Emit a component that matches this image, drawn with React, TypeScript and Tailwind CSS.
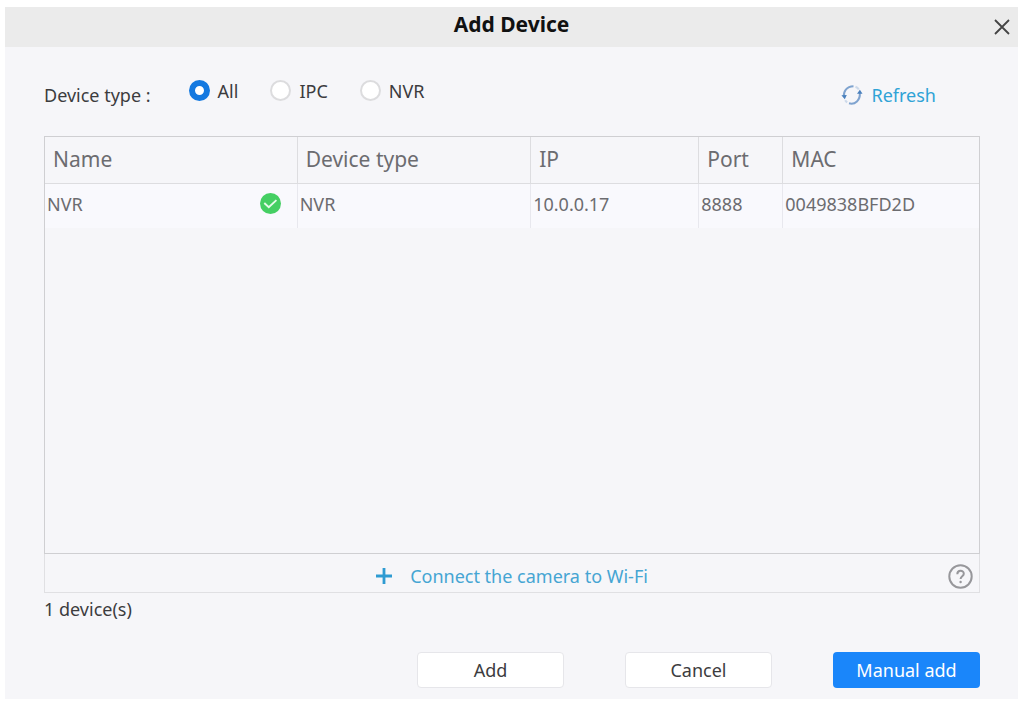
import { useState } from "react";

const deviceTypes = ["All", "IPC", "NVR"];

const devices = [
  { name: "NVR", type: "NVR", ip: "10.0.0.17", port: "8888", mac: "0049838BFD2D" },
];

const headCell = "border-r border-[#dddde0] pl-2 text-left text-[21px] font-normal last:border-r-0";
const bodyCell = "border-r border-[#e8e8ee] pb-1 pl-0.5 last:border-r-0";
const action = "h-9 w-[147px] rounded text-lg";

function CloseIcon() {
  return (
    <svg className="size-4" viewBox="0 0 16 16" fill="none" stroke="#444" strokeWidth="1.8" aria-hidden="true">
      <path d="M1 1l14 14M15 1L1 15" />
    </svg>
  );
}

function RefreshIcon() {
  return (
    <svg className="size-[22px]" viewBox="0 0 22 22" fill="none" stroke="#7fa3cf" strokeWidth="2" aria-hidden="true">
      <path d="M3 13C2.200 7.500 5.500 2.500 12.500 2.300" />
      <path d="M8 19.300C14 21 19.500 16 18.800 9" />
      <path d="M14.500 2.800c1.500.6 2.600 1.500 3.300 2.700M4.200 16.200c.6 1 1.200 1.700 2 2.200" strokeOpacity="0.35" />
      <path d="M.4 11.300l5.400-.2-2 4.200zM16 9.800l2.900-4 2.600 4z" fill="#4a80bd" stroke="none" />
    </svg>
  );
}

function CheckIcon() {
  return (
    <svg className="size-[21px]" viewBox="0 0 22 22" role="img" aria-label="Available">
      <circle cx="11" cy="11" r="11" fill="#45cf63" />
      <path d="M4.500 10.500l4.700 4.300 8-7.300" fill="none" stroke="#e6fbe9" strokeWidth="2" />
    </svg>
  );
}

function PlusIcon() {
  return (
    <svg className="size-4" viewBox="0 0 16 16" fill="none" stroke="#2e9bd2" strokeWidth="2.8" aria-hidden="true">
      <path d="M8 0v16M0 8h16" />
    </svg>
  );
}

function HelpIcon() {
  return (
    <svg className="size-[25px]" viewBox="0 0 25 25" fill="none" stroke="#97979b" strokeWidth="2" aria-hidden="true">
      <circle cx="12.500" cy="12.500" r="11.200" />
      <path d="M9.300 10.200c0-4.400 6.500-4.400 6.500-.5 0 2.500-3.200 2.600-3.200 5.300" />
      <circle cx="12.600" cy="18" r="1.200" fill="#97979b" stroke="none" />
    </svg>
  );
}

export default function App() {
  const [selected, setSelected] = useState("All");

  return (
    <div className="flex min-h-screen flex-col bg-white pt-[7px] pr-0.5 pb-1 pl-[5px] font-['Noto_Sans',sans-serif] text-lg text-[#3c3c3e]">
      <div role="dialog" aria-labelledby="dialog-title" className="flex flex-1 flex-col bg-[#f6f6f9]">
        <header className="grid h-10 grid-cols-[1fr_auto_1fr] items-center bg-[#ebebeb] px-2">
          <h1 id="dialog-title" className="col-start-2 pb-1.5 text-[21px] font-bold text-[#111]">
            Add Device
          </h1>
          <button type="button" aria-label="Close" className="justify-self-end">
            <CloseIcon />
          </button>
        </header>

        <main className="flex flex-1 flex-col pr-[38px] pb-[11px] pl-[39px]">
          <div className="flex h-[89px] items-center pt-1.5 pr-11">
            <fieldset className="flex items-center gap-[38px]">
              <legend className="float-left text-lg">Device type :</legend>
              <div className="flex gap-8 pb-2">
                {deviceTypes.map((type) => (
                  <label key={type} className="flex items-center gap-2">
                    <input
                      type="radio"
                      name="device-type"
                      checked={selected === type}
                      onChange={() => setSelected(type)}
                      className="size-[21px] appearance-none rounded-full border-2 border-[#dcdcde] bg-white checked:border-[6px] checked:border-[#1479e0]"
                    />
                    {type}
                  </label>
                ))}
              </div>
            </fieldset>
            <button type="button" className="ml-auto flex items-center gap-2 text-[#2fa3d6]">
              <RefreshIcon />
              Refresh
            </button>
          </div>

          <div className="flex-1 border border-[#cfcfd2]">
            <table className="w-full table-fixed border-collapse text-[#6c6c70]">
              <colgroup>
                <col className="w-[27%]" />
                <col className="w-[25%]" />
                <col className="w-[18%]" />
                <col className="w-[9%]" />
                <col className="w-[21%]" />
              </colgroup>
              <thead>
                <tr className="h-[46px] border-b border-[#dddde0]">
                  <th className={headCell}>Name</th>
                  <th className={headCell}>Device type</th>
                  <th className={headCell}>IP</th>
                  <th className={headCell}>Port</th>
                  <th className={headCell}>MAC</th>
                </tr>
              </thead>
              <tbody>
                {devices.map((device) => (
                  <tr key={device.mac} className="h-[45px] bg-[#f9f9fd]">
                    <td className={bodyCell}>
                      <div className="flex items-center justify-between pr-4">
                        {device.name}
                        <CheckIcon />
                      </div>
                    </td>
                    <td className={bodyCell}>{device.type}</td>
                    <td className={bodyCell}>{device.ip}</td>
                    <td className={bodyCell}>{device.port}</td>
                    <td className={bodyCell}>{device.mac}</td>
                  </tr>
                ))}
              </tbody>
            </table>
          </div>

          <div className="grid h-[39px] grid-cols-[1fr_auto_1fr] items-center border-x border-b border-[#e0e0e3] pt-1.5">
            <button type="button" className="col-start-2 flex items-center gap-[18px] text-[#45a5d3]">
              <PlusIcon />
              Connect the camera to Wi-Fi
            </button>
            <button type="button" aria-label="Help" className="mr-1.5 justify-self-end">
              <HelpIcon />
            </button>
          </div>

          <p className="pt-0.5">1 device(s)</p>

          <footer className="mt-[29px] flex justify-end gap-[61px]">
            <button type="button" className={`${action} border border-[#e6e6ea] bg-white`}>Add</button>
            <button type="button" className={`${action} border border-[#e6e6ea] bg-white`}>Cancel</button>
            <button type="button" className={`${action} bg-[#1a86fa] text-white`}>Manual add</button>
          </footer>
        </main>
      </div>
    </div>
  );
}
